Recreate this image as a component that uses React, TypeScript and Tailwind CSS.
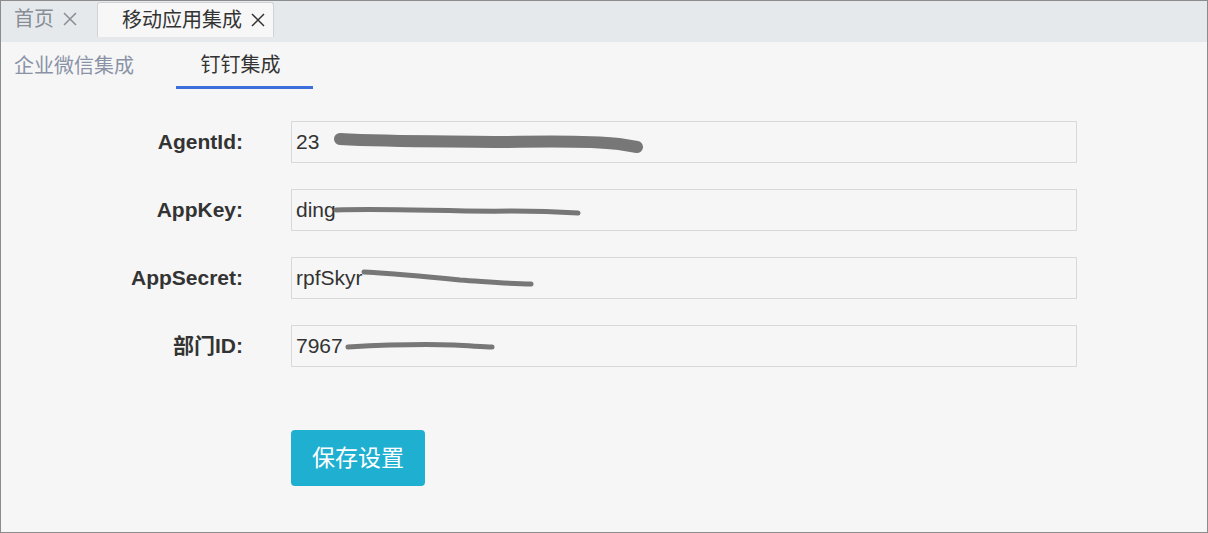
import React from "react";

type FieldType = {
  label: string;
  value: string;
  scribble: { w: number; h: number; left: number; top: number; d: string; width: number };
};

const fields: FieldType[] = [
  {
    label: "AgentId:",
    value: "23",
    scribble: {
      left: 42,
      top: 8,
      w: 310,
      h: 26,
      width: 12,
      d: "M6 9 C60 12 120 11 170 12 C220 11 260 11 285 14 L303 17",
    },
  },
  {
    label: "AppKey:",
    value: "ding",
    scribble: {
      left: 40,
      top: 14,
      w: 250,
      h: 14,
      width: 5,
      d: "M4 6 C60 4 120 8 180 7 C210 7 230 8 246 9",
    },
  },
  {
    label: "AppSecret:",
    value: "rpfSkyr",
    scribble: {
      left: 68,
      top: 8,
      w: 175,
      h: 24,
      width: 5,
      d: "M4 6 C40 8 70 11 100 14 C130 16 150 18 171 18",
    },
  },
  {
    label: "部门ID:",
    value: "7967",
    scribble: {
      left: 52,
      top: 14,
      w: 152,
      h: 14,
      width: 5,
      d: "M4 7 C40 5 80 4 110 5 C130 6 140 7 148 7",
    },
  },
];

function CloseIcon() {
  return (
    <svg width="14" height="14" viewBox="0 0 14 14" className="ml-[9px]">
      <path d="M1 1 L13 13 M13 1 L1 13" stroke="currentColor" strokeWidth="1.5" />
    </svg>
  );
}

function Field(props: FieldType) {
  const s = props.scribble;
  return (
    <div className="flex items-center h-[42px]">
      <div className="w-[242px] text-right font-bold text-[21px] text-[#333]">
        {props.label}
      </div>
      <div className="ml-[48px] w-[786px] h-[42px] border border-[#d9d9d9] bg-[#f6f6f6] relative flex items-center pl-[4px] text-[21px] text-[#333]">
        <span>{props.value}</span>
        <svg
          className="absolute"
          style={{ left: s.left, top: s.top }}
          width={s.w}
          height={s.h}
          viewBox={`0 0 ${s.w} ${s.h}`}
        >
          <path
            d={s.d}
            fill="none"
            stroke="#777"
            strokeWidth={s.width}
            strokeLinecap="round"
          />
        </svg>
      </div>
    </div>
  );
}

export default function App() {
  return (
    <div
      className="w-[1208px] h-[533px] border border-[#8c8c8c] bg-[#f6f6f6] flex flex-col overflow-hidden"
      style={{ fontFamily: '"Liberation Sans", "Noto Sans CJK SC", sans-serif' }}
    >
      <div className="h-[41px] bg-[#e5e9ec] flex items-start shrink-0">
        <div className="flex items-center h-[36px] pl-[13px] w-[96px] text-[20px] text-[#888d96]">
          <span>首页</span>
          <CloseIcon />
        </div>
        <div className="mt-[1px] h-[35px] w-[177px] bg-[#f7f7f7] border border-[#cfd3d6] border-b-0 rounded-t-[3px] flex items-center pl-[24px] text-[20px] text-[#333]">
          <span>移动应用集成</span>
          <CloseIcon />
        </div>
      </div>

      <div className="flex h-[47px] items-stretch shrink-0">
        <div className="pl-[13px] w-[175px] flex items-center text-[20px] text-[#8a93a6]">
          企业微信集成
        </div>
        <div className="w-[137px] flex items-center justify-center pr-[8px] text-[20px] text-[#333] border-b-[3px] border-[#3c6fdc] pt-[2px]">
          钉钉集成
        </div>
      </div>

      <div className="flex flex-col gap-[26px] mt-[32px]">
        {fields.map((f) => (
          <Field key={f.label} {...f} />
        ))}
      </div>

      <div className="pl-[290px] mt-[63px]">
        <button className="w-[134px] h-[56px] rounded-[4px] bg-[#1fb0d1] text-white text-[23px]">
          保存设置
        </button>
      </div>
    </div>
  );
}
